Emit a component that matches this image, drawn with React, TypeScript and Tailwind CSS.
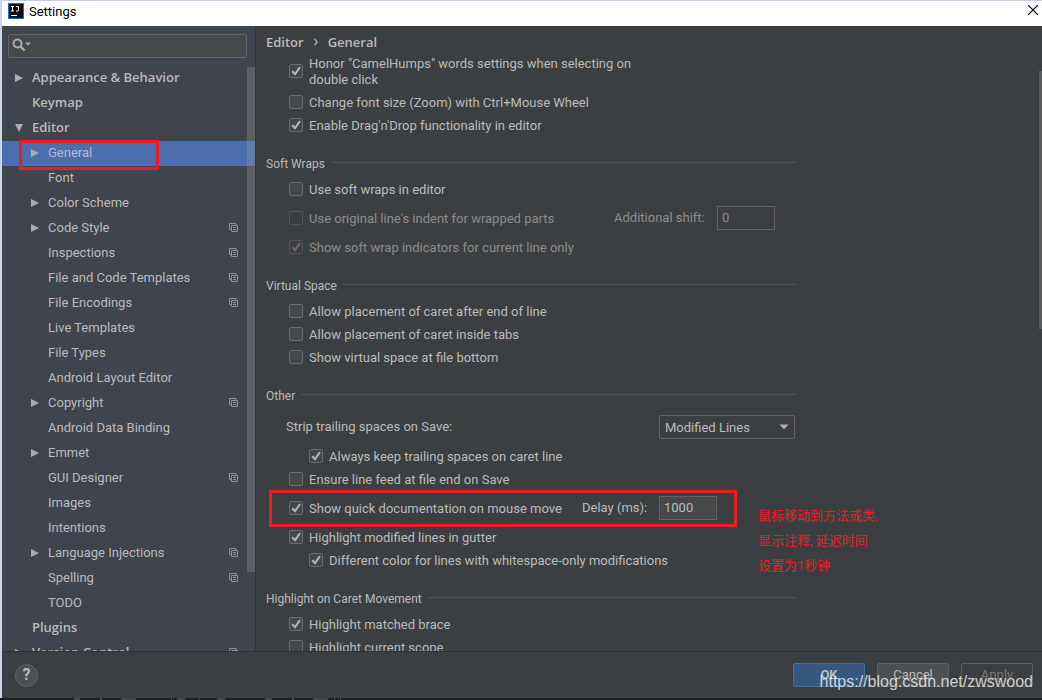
import React from "react";

type TreeItem = {
  label: string;
  level: 0 | 1;
  arrow?: "right" | "down";
  copy?: boolean;
  selected?: boolean;
};

const tree: TreeItem[] = [
  { label: "Appearance & Behavior", level: 0, arrow: "right" },
  { label: "Keymap", level: 0 },
  { label: "Editor", level: 0, arrow: "down" },
  { label: "General", level: 1, arrow: "right", selected: true },
  { label: "Font", level: 1 },
  { label: "Color Scheme", level: 1, arrow: "right" },
  { label: "Code Style", level: 1, arrow: "right", copy: true },
  { label: "Inspections", level: 1, copy: true },
  { label: "File and Code Templates", level: 1, copy: true },
  { label: "File Encodings", level: 1, copy: true },
  { label: "Live Templates", level: 1 },
  { label: "File Types", level: 1 },
  { label: "Android Layout Editor", level: 1 },
  { label: "Copyright", level: 1, arrow: "right", copy: true },
  { label: "Android Data Binding", level: 1 },
  { label: "Emmet", level: 1, arrow: "right" },
  { label: "GUI Designer", level: 1, copy: true },
  { label: "Images", level: 1 },
  { label: "Intentions", level: 1 },
  { label: "Language Injections", level: 1, arrow: "right", copy: true },
  { label: "Spelling", level: 1, copy: true },
  { label: "TODO", level: 1 },
  { label: "Plugins", level: 0 },
  { label: "Version Control", level: 0, arrow: "right", copy: true },
];

function Arrow({ dir }: { dir?: "right" | "down" }) {
  return (
    <svg width="10" height="10" viewBox="0 0 10 10" className="shrink-0 fill-[#adadad]" aria-hidden="true">
      {dir === "right" && <path d="M1 1 L9 5 L1 9 Z" />}
      {dir === "down" && <path d="M1 1 H9 L5 9 Z" />}
    </svg>
  );
}

function CopyIcon() {
  return (
    <svg width="10" height="10" viewBox="0 0 10 10" className="shrink-0" fill="none" stroke="#8b949e" aria-hidden="true">
      <path d="M2 6.5 H0.5 V0.5 H7 V2" />
      <path d="M2.5 2.5 H8.5 V8.5 H2.5 Z M4 4.5 H7 M4 6.5 H7" />
    </svg>
  );
}

function TreeRow({ item }: { item: TreeItem }) {
  return (
    <li
      className={
        "relative flex h-[25px] shrink-0 items-center gap-2 pr-4 pb-0.5 " +
        (item.level === 0 ? "pl-3 font-['Open_Sans',sans-serif] font-semibold " : "pl-7 ") +
        (item.selected ? "bg-[#4b6eaf]" : "")
      }
    >
      <Arrow dir={item.arrow} />
      <button type="button" className={"flex-1 truncate text-left leading-5" + (item.level === 0 ? " pb-0.5" : "")}>
        {item.label}
      </button>
      {item.copy && <CopyIcon />}
      {item.selected && (
        <span className="pointer-events-none absolute -top-px left-[17px] h-[30px] w-[140px] border-3 border-[#ed1c24]" />
      )}
    </li>
  );
}

function Check({
  label,
  checked = false,
  disabled = false,
  className = "",
}: {
  label: string;
  checked?: boolean;
  disabled?: boolean;
  className?: string;
}) {
  return (
    <label
      className={
        "flex min-h-[23px] items-center gap-1.5 pb-px leading-4 " + (disabled ? "text-[#8c8c8c] " : "") + className
      }
    >
      <span className="relative grid size-3.5 shrink-0">
        <input
          type="checkbox"
          defaultChecked={checked}
          disabled={disabled}
          className="peer size-3.5 appearance-none rounded-xs border border-[#6b6b6b] bg-[#43494a] disabled:border-[#545556] disabled:bg-transparent"
        />
        <svg
          viewBox="0 0 14 14"
          fill="none"
          stroke="currentColor"
          strokeWidth="2"
          className="pointer-events-none absolute inset-0 hidden text-[#b5b5b5] peer-checked:block peer-disabled:text-[#6b6b6b]"
          aria-hidden="true"
        >
          <path d="M3.2 7.2 L6 10.2 L11 3.2" />
        </svg>
      </span>
      <span className="pt-0.5">{label}</span>
    </label>
  );
}

function Section({ title, children }: { title: string; children: React.ReactNode }) {
  return (
    <section className="mt-[19px]">
      <h2 className="mb-1.5 flex h-4 items-center gap-1.5 text-xs leading-4">
        <span>{title}</span>
        <span className="mb-1 h-px flex-1 bg-[#515151]" />
      </h2>
      {children}
    </section>
  );
}

const buttonBase = "h-6 w-18 rounded-xs border text-center leading-5";

export default function App() {
  return (
    <div className="flex h-screen flex-col overflow-hidden border-t border-[#c5cde6] bg-[#1e1f20] font-['Roboto','Noto_Sans_CJK_SC',sans-serif] text-[13px] text-[#bbbbbb]">
      <div className="flex min-h-0 flex-1 flex-col border-l-2 border-[#ccd6e8] bg-[#3c3f41]">
        <header className="flex h-[25px] shrink-0 items-center bg-white pr-1 pl-1.5 text-black">
          <svg width="16" height="16" viewBox="0 0 16 16" className="mb-1.5 shrink-0" aria-hidden="true">
            <rect width="16" height="16" fill="#1271e0" />
            <rect x="1" y="1" width="14" height="14" fill="#0c0c0c" />
            <path
              d="M3 3.5 H6 M4.5 3.5 V8 M3 8 H6 M8 3.5 H10.5 V7 Q10.5 8.2 9.3 8.2 H8 M3 12.5 H9"
              fill="none"
              stroke="#ffffff"
            />
          </svg>
          <h1 className="mb-1 flex-1 pl-[5px] leading-5">Settings</h1>
          <button type="button" aria-label="Close" className="mb-2">
            <svg width="10" height="10" viewBox="0 0 10 10" fill="none" stroke="#000000" strokeWidth="1.2" aria-hidden="true">
              <path d="M0 0 L10 10 M10 0 L0 10" />
            </svg>
          </button>
        </header>

        <div className="flex min-h-0 flex-1">
          <aside className="relative flex w-[254px] shrink-0 flex-col border-r border-[#323435] bg-[#40444d]">
            <div className="relative mx-1.5 my-2 shrink-0">
              <input
                type="text"
                aria-label="Search settings"
                className="block h-6 w-[239px] rounded-xs border border-[#646464] bg-[#45494a] pl-7 outline-none"
              />
              <svg width="20" height="14" viewBox="0 0 20 14" className="absolute top-1 left-1" aria-hidden="true">
                <circle cx="5.5" cy="5.5" r="4" fill="none" stroke="#adadad" strokeWidth="2" />
                <path d="M8.5 8.5 L12.5 12.5" stroke="#adadad" strokeWidth="2.4" />
                <path d="M13 4.5 H19 L16 7.5 Z" fill="#adadad" />
              </svg>
            </div>
            <nav className="min-h-0 flex-1 overflow-hidden" aria-label="Settings categories">
              <ul className="flex flex-col">
                {tree.map((item) => (
                  <TreeRow key={item.label} item={item} />
                ))}
              </ul>
            </nav>
            <span className="pointer-events-none absolute top-[41px] right-0 h-[505px] w-2 bg-[#a0a0a0]/30" />
          </aside>

          <main className="relative flex min-w-0 flex-1 flex-col overflow-hidden pl-2.5">
            <div className="flex h-[27px] shrink-0 items-center gap-2.5 pt-1 font-['Open_Sans',sans-serif] font-semibold leading-5">
              <span>Editor</span>
              <svg width="4" height="8" viewBox="0 0 4 8" fill="none" stroke="#bbbbbb" strokeWidth="1.2" aria-hidden="true">
                <path d="M0.5 0.8 L3.2 4 L0.5 7.2" />
              </svg>
              <span>General</span>
            </div>

            <div className="min-h-0 max-w-[530px] flex-1">
              <div className="pl-[23px]">
                <Check
                  checked
                  className="mb-0.5 h-9 max-w-[360px]"
                  label={'Honor "CamelHumps" words settings when selecting on double click'}
                />
                <Check label="Change font size (Zoom) with Ctrl+Mouse Wheel" />
                <Check checked label="Enable Drag'n'Drop functionality in editor" />
              </div>

              <Section title="Soft Wraps">
                <div className="pl-[23px]">
                  <Check label="Use soft wraps in editor" />
                  <div className="my-[3px] flex h-[29px] items-center pb-px">
                    <Check disabled className="w-[325px]" label="Use original line's indent for wrapped parts" />
                    <label htmlFor="shift" className="w-[103px] text-[#8c8c8c]">
                      Additional shift:
                    </label>
                    <input
                      id="shift"
                      type="text"
                      disabled
                      defaultValue="0"
                      className="h-6 w-[58px] border border-[#646464] bg-transparent px-1 pb-0.5 text-[#8c8c8c]"
                    />
                  </div>
                  <Check checked disabled label="Show soft wrap indicators for current line only" />
                </div>
              </Section>

              <Section title="Virtual Space">
                <div className="pl-[23px]">
                  <Check label="Allow placement of caret after end of line" />
                  <Check label="Allow placement of caret inside tabs" />
                  <Check label="Show virtual space at file bottom" />
                </div>
              </Section>

              <Section title="Other">
                <div className="mt-[11px] mb-1.5 flex h-6 items-center justify-between pr-px pl-5">
                  <label htmlFor="strip">Strip trailing spaces on Save:</label>
                  <div className="relative">
                    <select
                      id="strip"
                      className="block h-6 w-[136px] appearance-none rounded-xs border border-[#646464] bg-[#3c3f41] pt-px pl-[5px] leading-5 outline-none"
                    >
                      <option>Modified Lines</option>
                    </select>
                    <svg
                      width="10"
                      height="6"
                      viewBox="0 0 10 6"
                      className="pointer-events-none absolute top-[9px] right-1.5 fill-[#adadad]"
                      aria-hidden="true"
                    >
                      <path d="M0.5 0.5 H9.5 L5 5.5 Z" />
                    </svg>
                  </div>
                </div>
                <div className="pl-[23px]">
                  <Check checked className="pl-5" label="Always keep trailing spaces on caret line" />
                  <Check label="Ensure line feed at file end on Save" />
                  <div className="relative my-[3px] flex h-[29px] items-center pb-px">
                    <Check checked className="w-[293px]" label="Show quick documentation on mouse move" />
                    <label htmlFor="delay" className="w-[77px]">
                      Delay (ms):
                    </label>
                    <input
                      id="delay"
                      type="text"
                      defaultValue="1000"
                      className="h-6 w-[58px] border border-[#646464] bg-[#45494a] px-1 pb-0.5 outline-none"
                    />
                    <span className="pointer-events-none absolute -top-1 -left-5 h-[37px] w-[468px] border-3 border-[#ed1c24]" />
                    <p className="absolute top-[9px] left-[469px] w-max text-[13px] leading-[25px] text-[#ed1c24]">
                      鼠标移动到方法或类,
                      <br />
                      显示注释, 延迟时间
                      <br />
                      设置为1秒钟
                    </p>
                  </div>
                  <Check checked label="Highlight modified lines in gutter" />
                  <Check checked className="pl-5" label="Different color for lines with whitespace-only modifications" />
                </div>
              </Section>

              <Section title="Highlight on Caret Movement">
                <div className="pl-[23px]">
                  <Check checked label="Highlight matched brace" />
                  <Check label="Highlight current scope" />
                </div>
              </Section>
            </div>
            <span className="absolute top-[45px] right-0 h-[258px] w-[3px] bg-[#585a5b]" />
          </main>
        </div>

        <footer className="relative flex h-[47px] shrink-0 items-center gap-3 border-t border-[#2f3233] pr-[9px] pl-[13px]">
          <button
            type="button"
            aria-label="Help"
            className="mr-auto size-[23px] rounded-full border border-[#646464] bg-[#4c5052] text-center text-base leading-5 font-bold"
          >
            ?
          </button>
          <button type="button" className={buttonBase + " border-[#4c708c] bg-[#365880] font-bold"}>
            OK
          </button>
          <button type="button" className={buttonBase + " border-[#5e6060] bg-[#4c5052]"}>
            Cancel
          </button>
          <button type="button" disabled className={buttonBase + " border-[#5e6060] text-[#777777]"}>
            Apply
          </button>
          <span className="pointer-events-none absolute right-[9px] bottom-1.5 font-['Liberation_Sans',sans-serif] text-base leading-5 text-white/75">
            https://blog.csdn.net/zwswood
          </span>
        </footer>
      </div>
      <div className="h-0.5 shrink-0 bg-[#1e1f20]">
        <svg width="300" height="2" viewBox="0 0 300 2" className="ml-[60px]" stroke="#6f7480" aria-hidden="true">
          <path d="M14 1 H20 M40 1 H42 M61 1 H76 M111 1 H112 M117 1 H125 M139 1 H140 M157 1 H165 M205 1 H212 M232 1 H234 M253 1 H268 M274 1 H275 M280 1 H281" />
        </svg>
      </div>
    </div>
  );
}
